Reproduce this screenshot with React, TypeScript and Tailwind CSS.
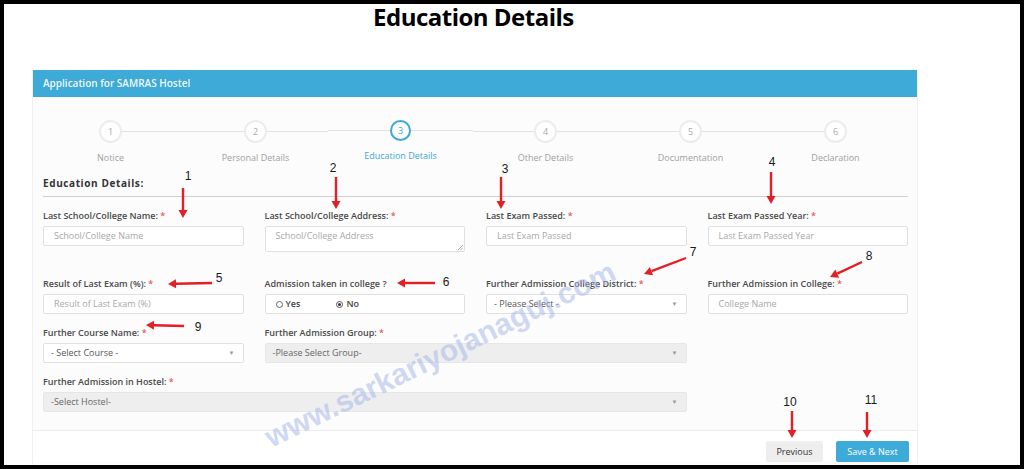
import React from "react";

const steps = ["Notice", "Personal Details", "Education Details", "Other Details", "Documentation", "Declaration"];

function Label({ text, req = true }: { text: string; req?: boolean }) {
  return (
    <div className="text-[9px] leading-[12px] font-semibold text-[#4a4a4a] mb-[4px] whitespace-nowrap">
      {text}
      {req && <span className="text-[#e55a55]"> *</span>}
    </div>
  );
}

function Input({ ph }: { ph: string }) {
  return (
    <div className="h-[20px] border border-[#e0e0e0] bg-white rounded-[2px] flex items-center pl-[10px] text-[9px] text-[#a8a8a8]">
      {ph}
    </div>
  );
}

function Select({ text, disabled = false }: { text: string; disabled?: boolean }) {
  return (
    <div
      className={
        disabled
          ? "h-[20px] border border-[#e6e6e6] bg-[#eeeeee] rounded-[2px] flex items-center justify-between pl-[7px] pr-[8px] text-[9px] text-[#666]"
          : "h-[20px] border border-[#e0e0e0] bg-white rounded-[2px] flex items-center justify-between pl-[7px] pr-[8px] text-[9px] text-[#555]"
      }
    >
      <span>{text}</span>
      <span className="text-[6px] text-[#999]">▼</span>
    </div>
  );
}

function Arrow({ x1, y1, x2, y2 }: { x1: number; y1: number; x2: number; y2: number }) {
  const dx = x2 - x1;
  const dy = y2 - y1;
  const len = Math.sqrt(dx * dx + dy * dy);
  const ux = dx / len;
  const uy = dy / len;
  const hl = 8;
  const hw = 4.5;
  const bx = x2 - ux * hl;
  const by = y2 - uy * hl;
  const px = -uy;
  const py = ux;
  return (
    <g>
      <line x1={x1} y1={y1} x2={bx} y2={by} stroke="#e31e24" strokeWidth={2.4} />
      <polygon
        points={`${x2},${y2} ${bx + px * hw},${by + py * hw} ${bx - px * hw},${by - py * hw}`}
        fill="#e31e24"
      />
    </g>
  );
}

const arrows = [
  [183, 188, 183, 218],
  [336, 177, 336, 209],
  [501, 177, 501, 209],
  [771, 172, 771, 204],
  [212, 283, 168, 284],
  [435, 283, 397, 283],
  [686, 258, 644, 274],
  [862, 262, 830, 277],
  [184, 326, 146, 325],
  [792, 411, 792, 438],
  [867, 412, 867, 438],
];

const nums: [string, number, number][] = [
  ["1", 188, 176],
  ["2", 333, 168],
  ["3", 505, 169],
  ["4", 772, 162],
  ["5", 219, 278],
  ["6", 446, 282],
  ["7", 693, 252],
  ["8", 869, 256],
  ["9", 198, 327],
  ["10", 790, 402],
  ["11", 871, 400],
];

export default function App() {
  return (
    <div
      className="relative w-[1024px] h-[469px] border-4 border-black bg-white overflow-hidden flex flex-col"
      style={{ fontFamily: '"Open Sans", "Noto Sans", sans-serif' }}
    >
      <div className="h-[66px] shrink-0 flex pl-[369px]">
        <h1 className="text-[24px] leading-[26px] font-bold text-black tracking-[-0.5px]">Education Details</h1>
      </div>

      <div className="ml-[28px] w-[886px] flex-1 flex flex-col bg-[#fcfcfc] border-x border-[#f0f0f0]">
        <div className="h-[27px] bg-[#3eaad8] flex items-center px-[10px] text-[10px] font-semibold text-white/95">
          Application for SAMRAS Hostel
        </div>

        <div className="pl-[10px] pr-[9px] flex flex-col">
          <div className="ml-[-5px] w-[870px] grid grid-cols-6 pt-[23px]">
            {steps.map((s, i) => (
              <div key={s} className="flex flex-col items-center">
                <div className="flex items-center w-full">
                  <div className={i === 0 ? "flex-1 h-px bg-transparent" : "flex-1 h-px bg-[#e2e2e2]"} />
                  <div
                    className={
                      i === 2
                        ? "w-[21px] h-[21px] rounded-full border-2 border-[#3ea8d6] bg-white text-[9px] text-[#3ea8d6] flex items-center justify-center"
                        : "w-[23px] h-[23px] rounded-full border-2 border-[#ececec] bg-white text-[9px] text-[#aaa] flex items-center justify-center"
                    }
                  >
                    {i + 1}
                  </div>
                  <div className={i === 5 ? "flex-1 h-px bg-transparent" : "flex-1 h-px bg-[#e2e2e2]"} />
                </div>
                <div
                  className={
                    i === 2
                      ? "mt-[9px] text-[9px] leading-[12px] text-[#3ea8d6]"
                      : "mt-[9px] text-[9px] leading-[12px] text-[#a0a0a0]"
                  }
                >
                  {s}
                </div>
              </div>
            ))}
          </div>

          <div className="mt-[12px] pb-[6px] border-b border-[#cfcfcf] text-[10px] leading-[14px] font-bold text-[#333] tracking-[0.6px]">
            Education Details:
          </div>

          <div className="grid grid-cols-4 gap-x-[21px] pt-[13px]">
            <div className="mb-[26px]">
              <Label text="Last School/College Name:" />
              <Input ph="School/College Name" />
            </div>
            <div className="mb-[26px]">
              <Label text="Last School/College Address:" />
              <div className="relative h-[26px] border border-[#e0e0e0] bg-white rounded-[2px] pl-[10px] pt-[2px] text-[9px] text-[#a8a8a8]">
                School/College Address
                <svg className="absolute right-[1px] bottom-[1px]" width="6" height="6" viewBox="0 0 6 6">
                  <path d="M1 6 L6 1 M3.5 6 L6 3.5" stroke="#999" strokeWidth="0.8" />
                </svg>
              </div>
            </div>
            <div className="mb-[26px]">
              <Label text="Last Exam Passed:" />
              <Input ph="Last Exam Passed" />
            </div>
            <div className="mb-[26px]">
              <Label text="Last Exam Passed Year:" />
              <Input ph="Last Exam Passed Year" />
            </div>

            <div className="mb-[13px]">
              <Label text="Result of Last Exam (%):" />
              <Input ph="Result of Last Exam (%)" />
            </div>
            <div className="mb-[13px]">
              <Label text="Admission taken in college ?" req={false} />
              <div className="h-[20px] border border-[#e0e0e0] bg-white rounded-[2px] flex items-center pl-[10px] text-[9px] font-semibold text-[#444]">
                <span className="flex items-center gap-[3px]">
                  <span className="w-[7px] h-[7px] rounded-full border border-[#666] bg-white" />
                  Yes
                </span>
                <span className="flex items-center gap-[3px] ml-[36px]">
                  <span className="w-[7px] h-[7px] rounded-full border border-[#555] bg-white flex items-center justify-center">
                    <span className="w-[3px] h-[3px] rounded-full bg-[#333]" />
                  </span>
                  No
                </span>
              </div>
            </div>
            <div className="mb-[13px]">
              <Label text="Further Admission College District:" />
              <Select text="- Please Select -" />
            </div>
            <div className="mb-[13px]">
              <Label text="Further Admission in College:" />
              <Input ph="College Name" />
            </div>

            <div className="mb-[13px]">
              <Label text="Further Course Name:" />
              <Select text="- Select Course -" />
            </div>
            <div className="mb-[13px] col-span-2">
              <Label text="Further Admission Group:" />
              <Select text="-Please Select Group-" disabled />
            </div>
            <div />

            <div className="col-span-3">
              <Label text="Further Admission in Hostel:" />
              <Select text="-Select Hostel-" disabled />
            </div>
          </div>
        </div>

        <div className="mt-[18px] border-t border-[#ececec] bg-white pt-[10px] pr-[8px] flex justify-end gap-[13px]">
          <button className="h-[21px] w-[57px] bg-[#eeeeee] rounded-[2px] text-[9px] text-[#333]">Previous</button>
          <button className="h-[21px] w-[73px] bg-[#3eaad8] rounded-[2px] text-[9px] text-white">Save &amp; Next</button>
        </div>
      </div>

      <div
        className="absolute left-[436px] top-[350px] whitespace-nowrap text-[30px] font-bold text-[#a8b8ea]/55 pointer-events-none"
        style={{
          fontFamily: '"Liberation Sans", Arial, sans-serif',
          transform: "translate(-50%, -50%) rotate(-26deg)",
        }}
      >
        www.sarkariyojanaguj.com
      </div>

      <svg className="absolute left-[-4px] top-[-4px] pointer-events-none" width="1024" height="469" viewBox="0 0 1024 469">
        {arrows.map((a, i) => (
          <Arrow key={i} x1={a[0]} y1={a[1]} x2={a[2]} y2={a[3]} />
        ))}
        {nums.map(([t, x, y]) => (
          <text
            key={t}
            x={x}
            y={y + 4}
            textAnchor="middle"
            fontSize="12"
            fill="#1a1a1a"
            style={{ fontFamily: '"Liberation Sans", Arial, sans-serif' }}
          >
            {t}
          </text>
        ))}
      </svg>
    </div>
  );
}
